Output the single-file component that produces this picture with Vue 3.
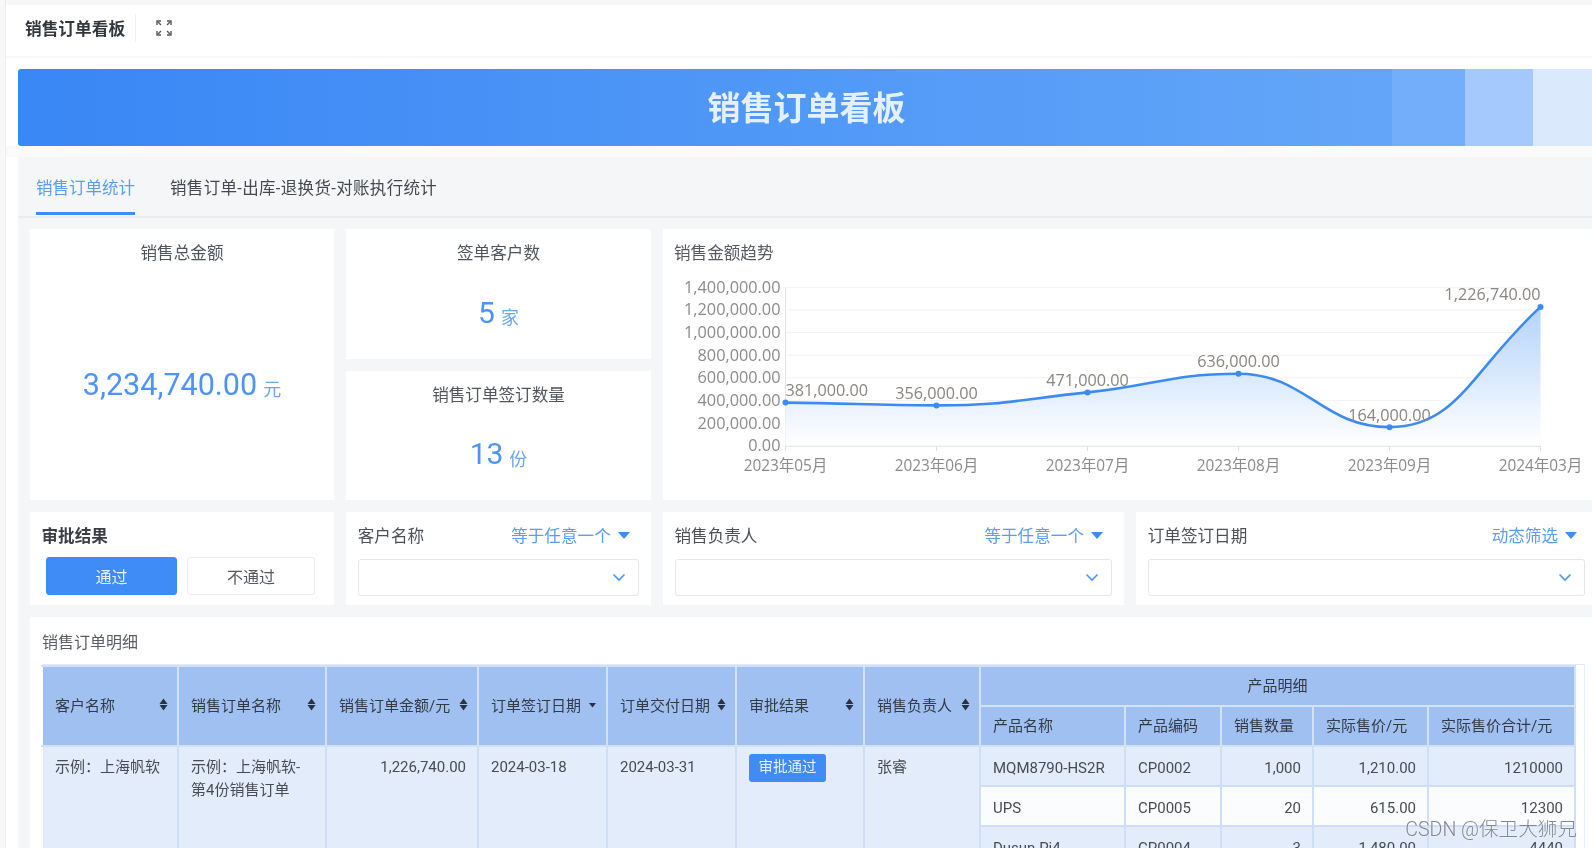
<script setup>
import { computed } from 'vue'

const stats = [
  { title: '签单客户数', value: '5', unit: '家' },
  { title: '销售订单签订数量', value: '13', unit: '份' },
]

const X0 = 122.5
const STEP = 151
const Y0 = 180.7
const SCALE = 158.4 / 1400000

const trend = [
  { month: '2023年05月', v: 381000, label: '381,000.00', anchor: 'start' },
  { month: '2023年06月', v: 356000, label: '356,000.00', anchor: 'middle' },
  { month: '2023年07月', v: 471000, label: '471,000.00', anchor: 'middle' },
  { month: '2023年08月', v: 636000, label: '636,000.00', anchor: 'middle' },
  { month: '2023年09月', v: 164000, label: '164,000.00', anchor: 'middle' },
  { month: '2024年03月', v: 1226740, label: '1,226,740.00', anchor: 'end' },
]

const points = computed(() =>
  trend.map((d, i) => ({ ...d, x: X0 + STEP * i, y: Y0 - d.v * SCALE }))
)

const yTicks = [0, 1, 2, 3, 4, 5, 6, 7].map((i) => ({
  y: Y0 - i * 22.63,
  label: i === 0 ? '0.00' : (i * 200000).toLocaleString('en-US') + '.00',
}))

const linePath = computed(() => {
  const p = points.value
  const slope = (i) => {
    if (i === 0) return ((p[1].y - p[0].y) / STEP) * 0.3
    if (i === p.length - 1) return ((p[i].y - p[i - 1].y) / STEP) * 1.15
    const a = p[i].y - p[i - 1].y
    const b = p[i + 1].y - p[i].y
    if (a * b <= 0) return 0
    return (p[i + 1].y - p[i - 1].y) / (2 * STEP)
  }
  let d = `M${p[0].x} ${p[0].y}`
  for (let i = 0; i < p.length - 1; i++) {
    const c = STEP * 0.45
    d += ` C${p[i].x + c} ${p[i].y + slope(i) * c} ${p[i + 1].x - c} ${p[i + 1].y - slope(i + 1) * c} ${p[i + 1].x} ${p[i + 1].y}`
  }
  return d
})
const areaPath = computed(() => `${linePath.value} L${X0 + STEP * 5} ${Y0} L${X0} ${Y0} Z`)

const colWidths = [136, 148, 152, 129, 129, 128, 116, 145, 96, 92, 115, 147]
const mainHeads = [
  { t: '客户名称' },
  { t: '销售订单名称' },
  { t: '销售订单金额/元' },
  { t: '订单签订日期', down: true },
  { t: '订单交付日期' },
  { t: '审批结果' },
  { t: '销售负责人' },
]
const productRows = [
  { name: 'MQM8790-HS2R', code: 'CP0002', qty: '1,000', price: '1,210.00', total: '1210000' },
  { name: 'UPS', code: 'CP0005', qty: '20', price: '615.00', total: '12300' },
  { name: 'Dusun Pi4', code: 'CP0004', qty: '3', price: '1,480.00', total: '4440' },
]
</script>

<template>
  <div class="page">
    <div class="gutter"></div>
    <div class="main">
      <header class="head">
        <span class="head-title">销售订单看板</span>
        <span class="head-sep"></span>
        <svg class="head-icon" width="16" height="16" viewBox="0 0 16 16" fill="none" stroke="#555" stroke-width="1.4">
          <path d="M1 5V1h4M11 1h4v4M15 11v4h-4M5 15H1v-4" />
          <path d="M2 2l3 3M14 2l-3 3M14 14l-3-3M2 14l3-3" />
        </svg>
      </header>

      <div class="banner-wrap">
        <div class="banner">
          <div class="seg seg-main"></div>
          <div class="seg seg-a"></div>
          <div class="seg seg-b"></div>
          <div class="seg seg-c"></div>
          <div class="banner-title">销售订单看板</div>
        </div>
      </div>

      <section class="panel">
        <nav class="tabs">
          <span class="tab active">销售订单统计</span>
          <span class="tab tab-long">销售订单-出库-退换货-对账执行统计</span>
        </nav>

        <div class="content">
          <div class="top-grid">
            <div class="card stat stat-big">
              <div class="stat-title">销售总金额</div>
              <div class="stat-body"><b>3,234,740.00</b><i>元</i></div>
            </div>
            <div class="stat-col">
              <div v-for="s in stats" :key="s.title" class="card stat">
                <div class="stat-title">{{ s.title }}</div>
                <div class="stat-body"><b>{{ s.value }}</b><i>{{ s.unit }}</i></div>
              </div>
            </div>
            <div class="card chart-card">
              <div class="chart-title">销售金额趋势</div>
              <svg class="chart" width="929" height="234" viewBox="0 0 929 234">
                <defs>
                  <linearGradient id="areaFill" x1="0" y1="0" x2="0" y2="1">
                    <stop offset="0" stop-color="#b4d3fb" />
                    <stop offset="1" stop-color="#ffffff" />
                  </linearGradient>
                </defs>
                <line v-for="t in yTicks.slice(1)" :key="t.y" x1="122.5" x2="877.5" :y1="t.y" :y2="t.y" stroke="#f3f3f3" />
                <line x1="122.5" x2="122.5" y1="22" y2="181" stroke="#e6e6e6" />
                <line x1="122.5" x2="877.5" y1="181" y2="181" stroke="#e0e0e0" stroke-width="1.5" />
                <line v-for="p in points" :key="p.month" :x1="p.x" :x2="p.x" y1="181" y2="186" stroke="#e0e0e0" />
                <path :d="areaPath" fill="url(#areaFill)" />
                <path :d="linePath" fill="none" stroke="#3c8bf5" stroke-width="2.6" />
                <circle v-for="p in points" :key="'c' + p.month" :cx="p.x" :cy="p.y" r="3" fill="#3c8bf5" />
                <text v-for="t in yTicks" :key="t.label" class="tick tick-y" x="117.5" :y="t.y + 5.5" text-anchor="end">{{ t.label }}</text>
                <text v-for="p in points" :key="'m' + p.month" class="tick" :x="p.x" y="206" text-anchor="middle">{{ p.month }}</text>
                <text v-for="p in points" :key="'l' + p.month" class="val" :x="p.x" :y="p.y - 6.5" :text-anchor="p.anchor">{{ p.label }}</text>
              </svg>
            </div>
          </div>

          <div class="filter-grid">
            <div class="card filter">
              <div class="f-head f-head-btn"><strong>审批结果</strong></div>
              <div class="btns">
                <button class="btn on">通过</button>
                <button class="btn">不通过</button>
              </div>
            </div>
            <div class="card filter">
              <div class="f-head">
                <span>客户名称</span>
                <span class="f-mode">等于任意一个<em class="tri"></em></span>
              </div>
              <div class="select"><svg width="14" height="9" viewBox="0 0 14 9" fill="none" stroke="#4a94f6" stroke-width="1.6"><path d="M1.5 1.5L7 7l5.5-5.5" /></svg></div>
            </div>
            <div class="card filter">
              <div class="f-head">
                <span>销售负责人</span>
                <span class="f-mode">等于任意一个<em class="tri"></em></span>
              </div>
              <div class="select"><svg width="14" height="9" viewBox="0 0 14 9" fill="none" stroke="#4a94f6" stroke-width="1.6"><path d="M1.5 1.5L7 7l5.5-5.5" /></svg></div>
            </div>
            <div class="card filter filter-last">
              <div class="f-head">
                <span>订单签订日期</span>
                <span class="f-mode">动态筛选<em class="tri"></em></span>
              </div>
              <div class="select"><svg width="14" height="9" viewBox="0 0 14 9" fill="none" stroke="#4a94f6" stroke-width="1.6"><path d="M1.5 1.5L7 7l5.5-5.5" /></svg></div>
            </div>
          </div>

          <div class="card detail">
            <div class="detail-title">销售订单明细</div>
            <div class="table-frame">
              <table>
                <colgroup>
                  <col v-for="(w, i) in colWidths" :key="i" :style="{ width: w + 'px' }" />
                </colgroup>
                <thead>
                  <tr>
                    <th v-for="h in mainHeads" :key="h.t" rowspan="2">
                      <div class="th-in">
                        <span>{{ h.t }}</span>
                        <svg width="9" height="13" viewBox="0 0 9 13" fill="#2a3240">
                          <path v-if="!h.down" d="M4.5 0.5L8.5 6H0.5z" />
                          <path :d="h.down ? 'M4.5 9.5L8 5H1z' : 'M4.5 12.5L8.5 7H0.5z'" />
                        </svg>
                      </div>
                    </th>
                    <th colspan="5" class="center">产品明细</th>
                  </tr>
                  <tr>
                    <th>产品名称</th>
                    <th>产品编码</th>
                    <th>销售数量</th>
                    <th>实际售价/元</th>
                    <th>实际售价合计/元</th>
                  </tr>
                </thead>
                <tbody>
                  <tr v-for="(r, i) in productRows" :key="r.code" :class="{ alt: i === 1 }">
                    <template v-if="i === 0">
                      <td rowspan="3" class="merged">示例：上海帆软</td>
                      <td rowspan="3" class="merged wrap">示例：上海帆软-<br />第4份销售订单</td>
                      <td rowspan="3" class="merged right">1,226,740.00</td>
                      <td rowspan="3" class="merged">2024-03-18</td>
                      <td rowspan="3" class="merged">2024-03-31</td>
                      <td rowspan="3" class="merged"><span class="tag">审批通过</span></td>
                      <td rowspan="3" class="merged">张睿</td>
                    </template>
                    <td>{{ r.name }}</td>
                    <td>{{ r.code }}</td>
                    <td class="right">{{ r.qty }}</td>
                    <td class="right">{{ r.price }}</td>
                    <td class="right">{{ r.total }}</td>
                  </tr>
                </tbody>
              </table>
            </div>
          </div>
        </div>
      </section>
    </div>
    <div class="watermark">CSDN @保卫大狮兄</div>
  </div>
</template>

<style>
html, body { margin: 0; overflow: hidden; background: #fff; }
</style>

<style scoped>
.page {
  position: relative;
  display: flex;
  width: 100%;
  height: 848px;
  overflow: hidden;
  background: #fff;
  color: #3f444c;
  font-family: Roboto, "Noto Sans CJK SC", sans-serif;
  font-size: 15px;
  filter: blur(0.5px);
}
.gutter { flex: none; width: 5px; background: #f8f8f8; border-right: 1px solid #ececec; }
.main { flex: 1; min-width: 0; display: flex; flex-direction: column; border-top: 5px solid #f7f7f7; }

.head { flex: none; height: 51px; box-sizing: border-box; display: flex; align-items: center; padding: 0 0 5px 19px; box-shadow: 0 2px 0 #f7f7f7; margin-bottom: 2px; }
.head-title { width: 100px; font-size: 16.7px; font-weight: 700; color: #33373d; white-space: nowrap; }
.head-sep { width: 1px; height: 28px; margin-left: 10px; background: #efefef; }
.head-icon { margin-left: 20px; }

.banner-wrap { flex: none; padding: 11px 0 11px 12px; background: linear-gradient(#fff 88px, #fafafa 88px); }
.banner { position: relative; height: 77px; display: flex; border-radius: 3px 0 0 3px; overflow: hidden; }
.seg { height: 100%; }
.seg-main { flex: 1; background: linear-gradient(90deg, #3987f5, #63a6f9); }
.seg-a { width: 73px; background: #72aefa; }
.seg-b { width: 68px; background: #a6c9fd; }
.seg-c { width: 59px; background: #dbe9fd; }
.banner-title {
  position: absolute;
  inset: 0 0 4px 3px;
  display: flex;
  align-items: center;
  justify-content: center;
  color: rgba(255, 255, 255, 0.85);
  font-size: 33px;
  font-weight: 700;
}

.panel { flex: 1; margin-left: 12px; background: #f5f6f8; min-height: 0; }
.tabs { height: 59px; display: flex; gap: 36px; padding-left: 18px; border-bottom: 2px solid #ebecef; box-sizing: content-box; }
.tab { display: flex; align-items: center; padding-top: 2px; height: 55px; font-size: 16.5px; color: #45494f; white-space: nowrap; }
.tab-long { letter-spacing: 0.33px; margin-left: -1px; }
.tab.active { color: #5a9df8; border-bottom: 3px solid #3f8cf6; margin-bottom: -1px; height: 58px; padding-top: 4px; box-sizing: border-box; }

.content { display: flex; flex-direction: column; gap: 12px; padding: 11px 0 0 12px; }
.card { background: #fff; min-width: 0; }

.top-grid { display: grid; grid-template-columns: 304px 304.5px 1fr; column-gap: 12.25px; height: 271px; }
.stat-col { display: flex; flex-direction: column; gap: 12px; min-height: 0; }
.stat-col .stat { flex: 1; }
.stat { display: flex; flex-direction: column; }
.stat-title { flex: none; height: 50px; line-height: 50px; text-align: center; font-size: 16.6px; color: #50555c; }
.stat-body { flex: 1; margin-top: -14px; padding-top: 1px; display: flex; align-items: center; justify-content: center; gap: 6px; color: #4d94f7; }
.stat-body b { font-weight: 400; font-size: 30px; }
.stat-big .stat-body { padding-top: 3px; }
.stat-big .stat-body b { font-size: 30.5px; }
.stat-body i { font-style: normal; font-size: 18px; margin-top: 8px; color: #6aa6f8; }

.chart-card { overflow: hidden; }
.chart-title { height: 36px; line-height: 50px; padding-left: 11px; font-size: 16.6px; color: #575b61; }
.chart { display: block; }
.tick, .val { font-family: "Open Sans", "Noto Sans CJK SC", sans-serif; font-size: 15.4px; fill: #8b8b8b; }
.tick-y { font-size: 16.3px; }
.val { fill: #8a857f; font-size: 16.2px; }

.filter-grid { display: grid; grid-template-columns: 304px 304.5px 461px 1fr; column-gap: 12.25px; height: 93px; }
.filter { display: flex; flex-direction: column; padding: 0 12px 0 11.5px; box-sizing: border-box; }
.filter-last { padding-right: 7px; }
.f-head { height: 47px; display: flex; align-items: center; justify-content: space-between; font-size: 16.6px; color: #4d5157; }
.f-head span { margin-top: -1px; }
.f-head-btn { height: 45px; }
.f-head strong { font-weight: 700; color: #3b3f45; }
.f-mode { display: flex; align-items: center; color: #5a9df8; padding-right: 9px; }
.filter-last .f-mode { padding-right: 8px; }
.tri { width: 0; height: 0; margin-left: 7px; border: 6px solid transparent; border-top: 7px solid #3f8cf6; border-bottom: 0; }

.btns { display: flex; gap: 10px; padding-left: 4.5px; }
.btn { width: 128px; height: 38px; box-sizing: border-box; border: 1px solid #ececec; border-radius: 3px; background: #fff; color: #55595f; font: inherit; font-size: 16px; padding: 0; }
.btn.on { width: 131px; background: #3f8cf6; border-color: #3f8cf6; color: #e8f1fe; }

.select { height: 37px; box-sizing: border-box; border: 1px solid #e6e7ea; border-radius: 3px; display: flex; align-items: center; justify-content: flex-end; padding-right: 12px; }

.detail { padding: 0 0 0 12px; }
.detail-title { height: 47px; line-height: 52px; font-size: 16px; color: #5a5e64; }
.table-frame { width: 1543px; border-top: 1px solid #dfe9fb; border-right: 1px solid #e6eefc; box-sizing: border-box; }
table { table-layout: fixed; width: 1533px; margin-left: -1px; border-collapse: collapse; }
th, td { border: 2px solid #d3e1f8; box-sizing: border-box; padding: 0 12px; height: 40px; font-weight: 400; text-align: left; white-space: nowrap; overflow: hidden; }
thead th:first-child, td.merged:first-child { border-left-color: #fff; }
th { background: #9fc0f0; color: #333a47; padding-bottom: 4px; }
th:has(.th-in) { padding-right: 9px; }
th.center { text-align: center; }
td { background: #e2ecfb; border-color: #cfdef8; color: #484c52; vertical-align: middle; padding-top: 3px; }
tr.alt td:not(.merged) { background: #fbfcfe; }
td.merged { vertical-align: top; padding-top: 9px; line-height: 23px; background: #e2ecfb; }
td.wrap { white-space: normal; }
td.right { text-align: right; padding-right: 11px; }
.th-in { display: flex; align-items: center; justify-content: space-between; }
.th-in svg { flex: none; }
.tag { display: inline-block; width: 77px; height: 28px; line-height: 28px; margin-top: -2px; text-align: center; border-radius: 3px; background: #3f8cf6; color: #e8f1fe; font-size: 14.5px; }

.watermark {
  position: absolute;
  right: 15px;
  bottom: 6px;
  font-family: Roboto, "Noto Sans CJK SC", sans-serif;
  font-weight: 300;
  font-size: 19.6px;
  color: rgba(110, 115, 125, 0.85);
  text-shadow: 0 0 2px rgba(255, 255, 255, 0.8);
}
</style>
